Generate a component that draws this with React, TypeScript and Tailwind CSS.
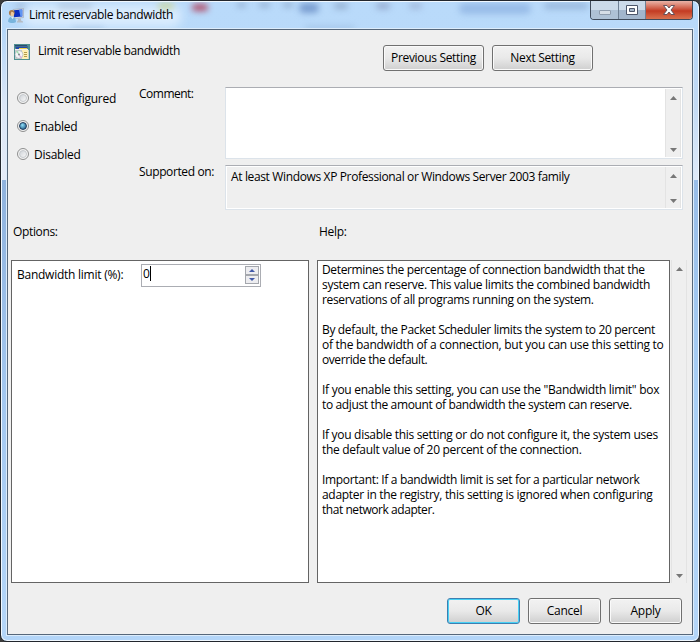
import type { ReactNode } from 'react'

const helpText = [
  {
    id: 'what',
    lines: [
      { text: 'Determines the percentage of connection bandwidth that the', spacing: 'tracking-[-0.35px]' },
      { text: 'system can reserve. This value limits the combined bandwidth', spacing: 'tracking-[-0.3px]' },
      { text: 'reservations of all programs running on the system.', spacing: 'tracking-[-0.34px]' },
    ],
  },
  {
    id: 'default',
    lines: [
      { text: 'By default, the Packet Scheduler limits the system to 20 percent', spacing: 'tracking-[-0.345px]' },
      { text: 'of the bandwidth of a connection, but you can use this setting to', spacing: 'tracking-[-0.27px]' },
      { text: 'override the default.', spacing: 'tracking-[-0.42px]' },
    ],
  },
  {
    id: 'enable',
    lines: [
      { text: 'If you enable this setting, you can use the "Bandwidth limit" box', spacing: 'tracking-[-0.28px]' },
      { text: 'to adjust the amount of bandwidth the system can reserve.', spacing: 'tracking-[-0.36px]' },
    ],
  },
  {
    id: 'disable',
    lines: [
      { text: 'If you disable this setting or do not configure it, the system uses', spacing: 'tracking-[-0.3px]' },
      { text: 'the default value of 20 percent of the connection.', spacing: 'tracking-[-0.32px]' },
    ],
  },
  {
    id: 'important',
    lines: [
      { text: 'Important: If a bandwidth limit is set for a particular network', spacing: 'tracking-[-0.32px]' },
      { text: 'adapter in the registry, this setting is ignored when configuring', spacing: 'tracking-[-0.3px]' },
      { text: 'that network adapter.', spacing: 'tracking-[-0.45px]' },
    ],
  },
]

const states = [
  { name: 'Not Configured', checked: false },
  { name: 'Enabled', checked: true },
  { name: 'Disabled', checked: false },
]

// blurred shapes showing through the glass frame
const smudges = [
  'left-[14px] top-[2px] h-[4px] w-[10px] bg-[#7d8ba5]/50',
  'left-[56px] top-[2px] h-[4px] w-[34px] bg-[#7d8ba5]/40',
  'left-[156px] top-[1px] h-[6px] w-[16px] bg-[#c3d08a]/80',
  'left-[190px] top-[2px] h-[7px] w-[16px] bg-[#b0405c]/90',
  'left-[235px] top-[1px] h-[4px] w-[9px] bg-[#6f86a8]/60',
  'left-[257px] top-[1px] h-[4px] w-[11px] bg-[#6f86a8]/60',
  'left-[281px] top-[1px] h-[4px] w-[10px] bg-[#6f86a8]/60',
  'left-[297px] top-[1px] h-[10px] w-[20px] bg-[#6a8ec6]/80',
  'left-[332px] top-[1px] h-[6px] w-[14px] bg-[#6f86a8]/50',
  'left-[374px] top-[1px] h-[6px] w-[14px] bg-[#7d8bb0]/60',
  'left-[407px] top-[1px] h-[6px] w-[13px] bg-[#8a97bd]/50',
  'left-[457px] top-[1px] h-[11px] w-[72px] bg-[#8aafe0]/70',
  'left-[542px] top-px h-[6px] w-[44px] bg-[#7f9cc4]/60',
  'left-[70px] top-[25px] h-[4px] w-[32px] bg-[#7fa0c8]/40',
  'left-[303px] top-[24px] h-[4px] w-[50px] bg-[#7fa0c8]/40',
]

function UserMonitorIcon() {
  return (
    <svg width="16" height="16" viewBox="0 0 16 16" aria-hidden="true">
      <path d="M5 1.500 15.500.5v9l-9.500 1z" fill="#dfe4ea" stroke="#98a4b4" strokeWidth=".6" />
      <path d="M6 2.300 14.300 1.500v7L6 9.300z" fill="#0b2fc0" />
      <path d="M11 1.800 14.300 1.500v7l-1.800.2z" fill="#5f95f2" />
      <path d="M10 10.500h3v2l2 1v1H9v-1l1-1z" fill="#b5bcc4" />
      <circle cx="3.800" cy="4.800" r="2.900" fill="#a87a4c" />
      <path d="M3.400 3.700c2 0 2.800 1 2.600 2.600C5.800 8 4.800 8.800 3.800 8.500 2.600 8 2.200 6 3.400 3.700z" fill="#edc99b" />
      <path d="M0 13.500C.3 10 2 8.500 4 8.700c2.500.2 4 2 4 5.300-2 1.500-6 1.500-8-.5z" fill="#79b4dc" />
      <path d="M3 9l1.500 2L6 9.200z" fill="#eaf5fb" />
    </svg>
  )
}

function PolicyIcon() {
  return (
    <svg width="16" height="16" viewBox="0 0 16 16" shapeRendering="crispEdges" aria-hidden="true">
      <path d="M0 0h16v16H0z" fill="#4f8f90" />
      <path d="M1 1h12v1H1z" fill="#2c4a70" />
      <path d="M1 2h13v2H1z" fill="#3f6d8f" />
      <path d="M2 3h11v2H2z" fill="#2446a8" />
      <path d="M5 4h8v1H5z" fill="#f0cf45" />
      <path d="M1 5h13v1H1z" fill="#efefef" />
      <path d="M1 6h14v9H1z" fill="#c9cfcc" />
      <path d="M8 6h6v9H8z" fill="#fff1b5" />
      <path d="M10 8h3v1h-3zM10 10h3v1h-3zM10 12h3v1h-3z" fill="#b39b4a" />
      <g shapeRendering="auto">
        <circle cx="5" cy="10.500" r="4" fill="#f4f4f6" stroke="#a3a9ae" strokeWidth=".6" />
        <path d="M5 10.500 2 8a4 4 0 0 1 2-1.300z" fill="#a5dfb0" />
        <path d="m5 10.500 3 2.500a4 4 0 0 1-2 1.300z" fill="#dfb3dd" />
        <circle cx="5" cy="10.500" r="1" fill="#7d8589" />
      </g>
    </svg>
  )
}

function Arrow({ down = false }: { down?: boolean }) {
  return (
    <svg width="7" height="4" viewBox="0 0 7 4" className="block" aria-hidden="true">
      <path d={down ? 'M0 0h7L3.500 4z' : 'M0 4h7L3.500 0z'} fill="#777" />
    </svg>
  )
}

function SpinArrow({ down = false }: { down?: boolean }) {
  return (
    <svg width="6" height="3" viewBox="0 0 6 3" className="block" aria-hidden="true">
      <path d={down ? 'M0 0h6L3 3z' : 'M0 3h6L3 0z'} fill="#4159a8" />
    </svg>
  )
}

function ScrollBar() {
  return (
    <div className="flex w-4 shrink-0 flex-col items-center justify-between border-x border-[#e3e3e3] bg-[#efefef] pt-[7px] pb-[5px]">
      <Arrow />
      <Arrow down />
    </div>
  )
}

function Button({ children, className, primary = false }: { children: ReactNode; className: string; primary?: boolean }) {
  return (
    <button
      type="button"
      className={`flex h-[26px] items-center justify-center rounded-[3px] border bg-linear-to-b from-[#f2f2f2] from-0% via-[#e9e9e9] via-50% to-[#cfcfcf] pb-px ${
        primary ? 'border-[#3c7fb1] shadow-[inset_0_0_0_1px_#48d1f5]' : 'border-[#707070] shadow-[inset_0_0_0_1px_#fafafa]'
      } ${className}`}
    >
      {children}
    </button>
  )
}

function Glass() {
  return (
    <div className="absolute inset-px overflow-hidden rounded-[6px]" aria-hidden="true">
      <div className="absolute top-[28px] left-0 h-[150px] w-[6px] bg-linear-to-b from-[#b5d6f8] via-[#dbe6f6] to-[#e4ebf7]" />
      <div className="absolute top-[28px] right-0 h-[150px] w-[6px] bg-linear-to-b from-[#b5d6f8] via-[#c3daf3] to-[#dfeaf8]" />
      <div className="absolute top-[178px] left-0 h-[440px] w-[6px] bg-linear-to-b from-[#8fb2dd] via-[#a4c8f0] to-[#b3d5f8]" />
      <div className="absolute top-[178px] right-0 h-[440px] w-[6px] bg-linear-to-b from-[#98bde8] via-[#a9cff5] to-[#b3d5f8]" />
      <div className="absolute top-[3px] left-[20px] h-[22px] w-[160px] rounded-full bg-[#e8f3ff]/70 blur-[5px]" />
      {smudges.map((smudge) => (
        <div key={smudge} className={`absolute rounded-full blur-[3px] ${smudge}`} />
      ))}
    </div>
  )
}

function TitleBar() {
  return (
    <div className="flex h-[28px] shrink-0 items-start justify-between pl-[7px]">
      <div className="flex h-[26px] items-center gap-[5px]">
        <div className="pt-[3px]">
          <UserMonitorIcon />
        </div>
        <span className="tracking-[-0.34px]">Limit reservable bandwidth</span>
      </div>
      <div className="mr-[6px] flex h-[19px] overflow-hidden rounded-b-[4px] border border-t-0 border-[#3f4b5b]">
        <div className="flex w-[28px] items-center justify-center border-r border-[#6f8094] bg-linear-to-b from-[#cbdae9] from-50% to-[#aec1d5] to-50%">
          <span className="mt-[5px] h-[5px] w-[12px] rounded-[1px] border border-[#8e9cad] bg-[#d5dde6]" />
        </div>
        <div className="flex w-[27px] items-center justify-center border-r border-[#6f8094] bg-linear-to-b from-[#cbdae9] from-50% to-[#a2b6cc] to-50%">
          <svg width="12" height="10" viewBox="0 0 12 10">
            <path d="M.5.5h11v9H.5z" fill="#fff" stroke="#4c566a" />
            <path d="M3.500 3.500h5v3h-5z" fill="#a7b7c9" stroke="#4c566a" />
          </svg>
        </div>
        <div className="flex w-[46px] items-center justify-center bg-linear-to-b from-[#e9b3a8] from-0% via-[#c33a22] via-55% to-[#d9714f]">
          <svg width="12" height="10" viewBox="0 0 12 10">
            <path d="M.5.5h3.500L6 3 8 .5h3.500L8 5l3.500 4.500H8L6 7 4 9.500H.5L4 5z" fill="#fff" stroke="#5a4a55" strokeWidth=".9" />
          </svg>
        </div>
      </div>
    </div>
  )
}

function Radio({ name, checked }: { name: string; checked: boolean }) {
  return (
    <label className="flex h-7 items-center gap-[5px]">
      <span className="flex size-3 items-center justify-center rounded-full border border-[#8e8f8f] bg-[#f4f4f4]">
        <span
          className={
            checked
              ? 'size-2 rounded-full border border-[#1d3a5b] bg-radial-[at_40%_35%] from-[#8fe0fa] to-[#0d4373]'
              : 'size-2 rounded-full border border-[#c6cacd] bg-linear-to-br from-[#d0d4d9] to-[#f8f8f8]'
          }
        />
      </span>
      <span className="tracking-[-0.26px]">{name}</span>
    </label>
  )
}

export default function App() {
  return (
    <div className="h-[642px] w-[700px] bg-[#3c3c3c] font-['Open_Sans','Noto_Sans',sans-serif] text-[12px] leading-[15px] whitespace-nowrap text-black">
      <div className="relative h-full overflow-hidden rounded-[7px] border border-[#22262d] bg-linear-to-b from-[#b9dafa] to-[#b3d5f8] shadow-[inset_0_0_0_1px_#f0f8ff]">
        <Glass />
        <div className="relative flex h-full flex-col">
          <TitleBar />
          <div className="mx-[6px] flex h-[606px] shrink-0 flex-col border border-[#56677a] bg-[#efefef] shadow-[0_0_0_1px_#dcecfb]">
            <div className="flex h-[57px] shrink-0">
              <div className="flex w-[375px] items-start gap-2 pt-[14px] pl-[6px]">
                <PolicyIcon />
                <span className="-mt-px tracking-[-0.42px]">Limit reservable bandwidth</span>
              </div>
              <div className="flex gap-2 pt-[15px]">
                <Button className="w-[101px] tracking-[-0.32px]">Previous Setting</Button>
                <Button className="w-[101px] tracking-[-0.32px]">Next Setting</Button>
              </div>
            </div>

            <div className="flex h-[137px] shrink-0">
              <div className="-mt-[3px] w-[131px] pl-[9px]">
                {states.map((state) => (
                  <Radio key={state.name} {...state} />
                ))}
              </div>
              <div className="-mt-px w-[86px]">
                <div className="h-[78px] tracking-[-0.5px]">Comment:</div>
                <div className="tracking-[-0.38px]">Supported on:</div>
              </div>
              <div className="flex w-[458px] flex-col gap-[6px]">
                <div className="flex h-[72px] justify-end border border-[#dce3ea] border-t-[#abadb3] bg-white p-px">
                  <ScrollBar />
                </div>
                <div className="flex h-[45px] justify-between border border-[#dce3ea] border-t-[#abadb3] bg-[#efefef] p-px shadow-[inset_0_0_0_1px_#fff]">
                  <span className="pt-[2px] pl-1 tracking-[-0.36px]">
                    At least Windows XP Professional or Windows Server 2003 family
                  </span>
                  <ScrollBar />
                </div>
              </div>
            </div>

            <div className="flex h-[36px] shrink-0 pl-[5px]">
              <span className="w-[306px] tracking-[-0.35px]">Options:</span>
              <span className="tracking-[-0.3px]">Help:</span>
            </div>

            <div className="flex h-[323px] shrink-0 pl-[3px]">
              <div className="flex w-[298px] items-start border border-[#646464] bg-white pt-[3px] pl-[5px]">
                <span className="w-[124px] pt-[3px] tracking-[-0.25px]">Bandwidth limit (%):</span>
                <div className="flex h-[23px] w-[120px] justify-between border border-[#abadb3] p-px">
                  <div className="flex h-[15px] items-center">
                    <span>0</span>
                    <span className="h-[15px] w-px bg-black" />
                  </div>
                  <div className="flex h-[18px] w-[14px] flex-col">
                    <div className="flex h-[9px] items-center justify-center border border-[#a4a7ad] bg-[#ededf0]">
                      <SpinArrow />
                    </div>
                    <div className="flex h-[9px] items-center justify-center border border-[#a4a7ad] bg-[#ededf0]">
                      <SpinArrow down />
                    </div>
                  </div>
                </div>
              </div>
              <div className="ml-2 flex w-[353px] flex-col gap-[15px] border border-[#646464] bg-white pt-px pl-1">
                {helpText.map((paragraph) => (
                  <div key={paragraph.id}>
                    {paragraph.lines.map((line) => (
                      <p key={line.text} className={line.spacing}>
                        {line.text}
                      </p>
                    ))}
                  </div>
                ))}
              </div>
              <div className="ml-px flex">
                <ScrollBar />
              </div>
            </div>

            <div className="flex justify-end gap-2 pt-[15px] pr-[10px]">
              <Button primary className="w-[73px] tracking-[-0.3px]">
                OK
              </Button>
              <Button className="w-[73px] tracking-[-0.3px]">Cancel</Button>
              <Button className="w-[73px] tracking-[-0.3px]">Apply</Button>
            </div>
          </div>
        </div>
      </div>
    </div>
  )
}
